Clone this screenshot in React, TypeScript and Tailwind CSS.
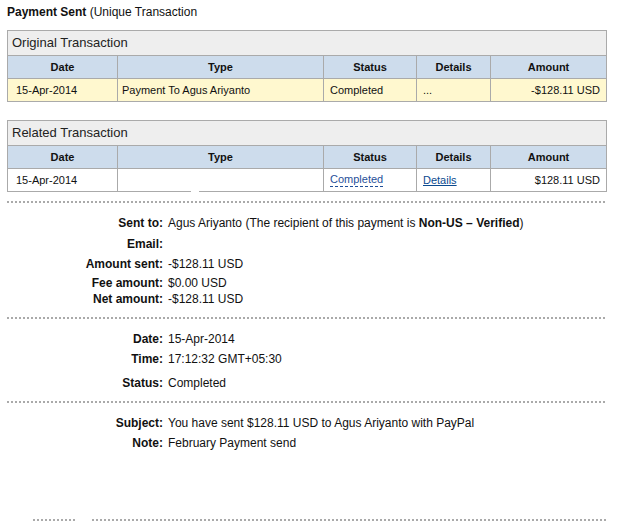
import type { ReactNode } from "react";

const COLS = "grid grid-cols-[109px_206px_93px_74px_116px]";

type Row = {
  date: string;
  type: string;
  status: ReactNode;
  details: ReactNode;
  amount: string;
};

function TxTable({ title, row, tint }: { title: string; row: Row; tint: boolean }) {
  return (
    <div className="relative w-[600px] border border-[#aaaaaa]">
      <div className="flex h-[25px] items-center border-b border-[#aaaaaa] bg-[#eeeeee] pl-[4px] text-[13px] text-[#222]">
        {title}
      </div>
      <div className={`${COLS} h-[23px] border-b border-[#aaaaaa] bg-[#cddcec] text-[11px] font-bold text-[#111]`}>
        <div className="flex items-center justify-center">Date</div>
        <div className="flex items-center justify-center border-l border-[#aaaaaa]">Type</div>
        <div className="flex items-center justify-center border-l border-[#aaaaaa]">Status</div>
        <div className="flex items-center justify-center border-l border-[#aaaaaa]">Details</div>
        <div className="flex items-center justify-center border-l border-[#aaaaaa]">Amount</div>
      </div>
      <div className={`${COLS} h-[22px] text-[11px] text-[#111] ${tint ? "bg-[#fff8cf]" : "bg-white"}`}>
        <div className="flex items-center pl-[8px]">{row.date}</div>
        <div className="flex items-center border-l border-[#aaaaaa] pl-[4px]">{row.type}</div>
        <div className="flex items-center border-l border-[#aaaaaa] pl-[6px]">{row.status}</div>
        <div className="flex items-center border-l border-[#aaaaaa] pl-[6px]">{row.details}</div>
        <div className="flex items-center justify-end border-l border-[#aaaaaa] pr-[6px]">{row.amount}</div>
      </div>
    </div>
  );
}

function Dots({ className = "" }: { className?: string }) {
  return (
    <div
      className={`h-[2px] w-[600px] bg-[repeating-linear-gradient(to_right,#aaaaaa_0_2px,transparent_2px_4px)] ${className}`}
    />
  );
}

function Field({ label, children, className = "" }: { label: string; children?: ReactNode; className?: string }) {
  return (
    <div className={`flex h-[16px] items-center text-[12px] leading-[16px] text-[#111] ${className}`}>
      <div className="w-[156px] shrink-0 text-right font-bold">{label}</div>
      <div className="pl-[5px]">{children}</div>
    </div>
  );
}

export default function App() {
  return (
    <div className="min-h-[521px] bg-white pl-[7px] pt-[4px] font-['Liberation_Sans',Arial,sans-serif]">
      <div className="h-[16px] text-[12px] leading-[16px] text-[#111]">
        <span className="font-bold">Payment Sent</span> (Unique Transaction
      </div>

      <div className="mt-[10px]">
        <TxTable
          title="Original Transaction"
          tint
          row={{
            date: "15-Apr-2014",
            type: "Payment To Agus Ariyanto",
            status: "Completed",
            details: "...",
            amount: "-$128.11 USD",
          }}
        />
      </div>

      <div className="relative mt-[18px]">
        <TxTable
          title="Related Transaction"
          tint={false}
          row={{
            date: "15-Apr-2014",
            type: "",
            status: (
              <span className="border-b border-dashed border-[#1f4f99] leading-[13px] text-[#1f4f99]">
                Completed
              </span>
            ),
            details: <span className="text-[#0b4a8f] underline">Details</span>,
            amount: "$128.11 USD",
          }}
        />
        {/* redacted gap in the bottom border */}
        <span className="absolute bottom-0 left-[184px] h-[1px] w-[8px] bg-white" />
      </div>

      <Dots className="mt-[9px]" />

      <Field label="Sent to:" className="mt-[12px]">
        Agus Ariyanto (The recipient of this payment is <span className="font-bold">Non-US – Verified</span>)
      </Field>
      <Field label="Email:" className="mt-[5px]" />
      <Field label="Amount sent:" className="mt-[4px]">-$128.11 USD</Field>
      <Field label="Fee amount:" className="mt-[3px]">$0.00 USD</Field>
      <Field label="Net amount:">-$128.11 USD</Field>

      <Dots className="mt-[10px]" />

      <Field label="Date:" className="mt-[12px]">15-Apr-2014</Field>
      <Field label="Time:" className="mt-[4px]">17:12:32 GMT+05:30</Field>
      <Field label="Status:" className="mt-[8px]">Completed</Field>

      <Dots className="mt-[10px]" />

      <Field label="Subject:" className="mt-[12px]">You have sent $128.11 USD to Agus Ariyanto with PayPal</Field>
      <Field label="Note:" className="mt-[4px]">February Payment send</Field>

      <div className="mt-[68px] flex">
        <div className="ml-[26px] h-[2px] w-[42px] bg-[repeating-linear-gradient(to_right,#aaaaaa_0_2px,transparent_2px_4px)]" />
        <div className="ml-[17px] h-[2px] w-[515px] bg-[repeating-linear-gradient(to_right,#aaaaaa_0_2px,transparent_2px_4px)]" />
      </div>
    </div>
  );
}
